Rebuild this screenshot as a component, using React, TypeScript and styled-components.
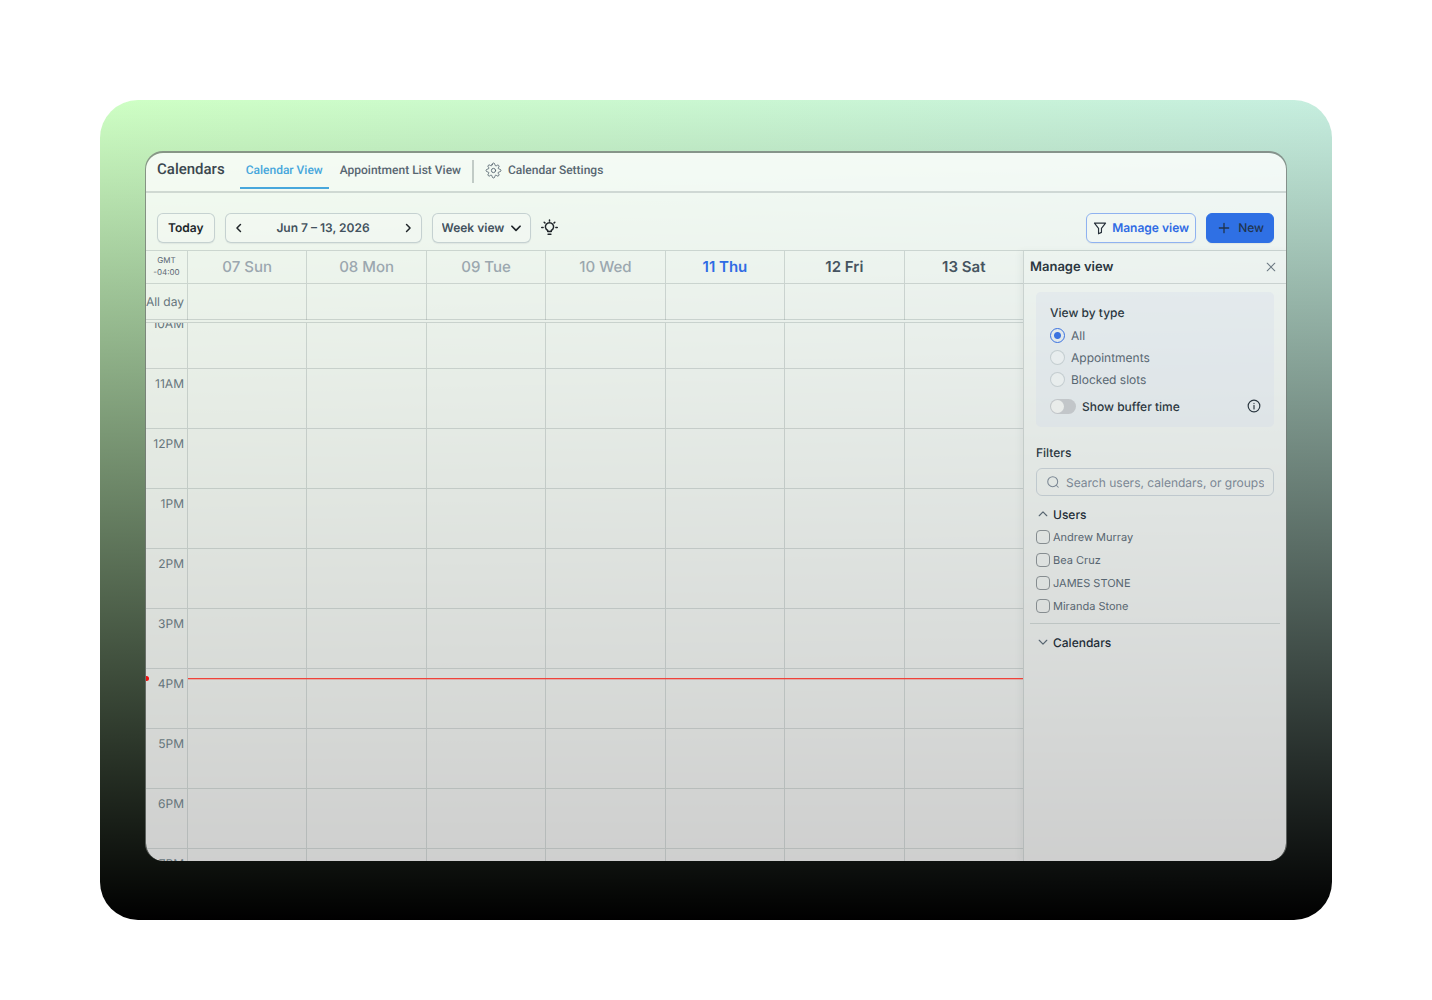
import React, { useState } from "react";
import styled, { createGlobalStyle } from "styled-components";

const GlobalStyle = createGlobalStyle`
  *, *::before, *::after { box-sizing: border-box; }
  body {
    margin: 0;
    background: #fff;
    font-family: Inter, "Liberation Sans", sans-serif;
    text-rendering: geometricPrecision;
  }
  button, input, select { font: inherit; color: inherit; margin: 0; text-rendering: inherit; }
  button { cursor: pointer; padding: 0; background: none; border: 0; }
  h1, h2, h3, p { margin: 0; font: inherit; }
`;

const line = "rgba(110, 122, 122, 0.26)";
const ink = "#2b3740";
const muted = "#586671";

const Page = styled.main`
  display: flex;
  height: 100vh;
  min-height: 640px;
  padding: 100px 100px 80px;
`;

const Backdrop = styled.div`
  flex: 1;
  min-width: 0;
  display: flex;
  padding: 51px 45px 59px;
  border-radius: 38px;
  background: linear-gradient(180deg, rgba(0, 0, 0, 0), #000),
    linear-gradient(90deg, #ceffc4, #c6eedf);
`;

const Window = styled.div`
  flex: 1;
  min-width: 0;
  display: flex;
  flex-direction: column;
  overflow: hidden;
  border: 1px solid rgba(116, 120, 118, 0.75);
  border-top-width: 2px;
  border-bottom: 0;
  border-radius: 18px;
  background: rgba(255, 255, 255, 0.8);
  background-clip: padding-box;
`;

const Header = styled.header`
  display: flex;
  align-items: flex-start;
  height: 40px;
  flex-shrink: 0;
  padding: 0 11px;
  font-family: Roboto, "Liberation Sans", sans-serif;
  font-size: 12px;
  font-weight: 500;
  color: ${muted};
  background: rgba(255, 255, 255, 0.15);
  border-bottom: 2px solid ${line};
`;

const Title = styled.h1`
  font-size: 15px;
  font-weight: 500;
  line-height: 33px;
  color: #3b474f;
  margin-right: 15px;
`;

const Tab = styled.a<{ $active?: boolean }>`
  display: flex;
  align-items: center;
  gap: 6px;
  height: 36px;
  padding: 0 6px;
  text-decoration: none;
  color: ${(p) => (p.$active ? "#47a7dc" : "inherit")};
  border-bottom: 2px solid ${(p) => (p.$active ? "#47a7dc" : "transparent")};
  white-space: nowrap;
`;

const Nav = styled.nav`
  display: flex;
  align-items: center;
  gap: 5px;
`;

const Separator = styled.span`
  width: 2px;
  height: 23px;
  background: rgba(100, 115, 115, 0.35);
`;

const Toolbar = styled.div`
  display: flex;
  align-items: center;
  gap: 10px;
  height: 58px;
  flex-shrink: 0;
  padding: 12px 12px 0 11px;
  border-bottom: 1px solid ${line};
  font-size: 12px;
  font-weight: 600;
  color: #43525e;
`;

const Box = styled.div`
  display: flex;
  align-items: center;
  height: 30px;
  border: 1px solid rgba(130, 150, 160, 0.4);
  border-radius: 6px;
  background: rgba(255, 255, 255, 0.2);
  box-shadow: 0 1px 1px rgba(60, 80, 90, 0.08);
  white-space: nowrap;
`;

const TodayButton = styled(Box).attrs({ as: "button" })`
  padding: 0 10px;
  color: #20262a;
`;

const RangeBox = styled(Box)`
  width: 197px;
  justify-content: space-between;
  padding: 0 6px;
`;

const IconButton = styled.button<{ $color?: string }>`
  display: grid;
  place-items: center;
  width: 14px;
  height: 20px;
  color: ${(p) => p.$color || "#1f2529"};
`;

const SelectBox = styled(Box)`
  position: relative;
  width: 99px;
  svg { position: absolute; right: 7px; pointer-events: none; color: #20262a; }
`;

const Select = styled.select`
  appearance: none;
  width: 100%;
  height: 100%;
  border: 0;
  padding: 0 24px 0 9px;
  background: transparent;
`;

const ManageButton = styled(Box).attrs({ as: "button" })`
  gap: 5px;
  padding: 0 6px;
  margin-left: auto;
  border-color: #8fb2f0;
  color: #2f6be4;
  svg { color: #27303a; }
`;

const NewButton = styled(Box).attrs({ as: "button" })`
  gap: 6px;
  padding: 0 9px;
  border-color: #2f70e4;
  background: #2f70e4;
  color: #21354f;
  font-weight: 500;
`;

const Content = styled.div`
  flex: 1;
  min-height: 0;
  display: flex;
`;

const Calendar = styled.section`
  flex: 1;
  min-width: 0;
  display: flex;
  flex-direction: column;
`;

const Row = styled.div<{ $h: number }>`
  display: grid;
  grid-template-columns: 41px repeat(7, minmax(0, 1fr));
  height: ${(p) => p.$h}px;
  flex-shrink: 0;
  border-bottom: 1px solid ${line};
`;

const Cell = styled.div`
  border-left: 1px solid ${line};
`;

const DayCell = styled(Cell)<{ $tone: string }>`
  font-size: 15px;
  line-height: 32px;
  text-align: center;
  font-weight: ${(p) => (p.$tone === "past" ? 500 : 600)};
  color: ${(p) =>
    p.$tone === "past" ? "#9ba7af" : p.$tone === "today" ? "#2f6be4" : "#465460"};
`;

const Zone = styled.div`
  padding-top: 3px;
  font-size: 8px;
  line-height: 12px;
  text-align: center;
  color: ${muted};
`;

const TimeLabel = styled.div`
  display: flex;
  justify-content: flex-end;
  padding-right: 3px;
  font-size: 12px;
  line-height: 30px;
  white-space: nowrap;
  color: #66757c;
`;

const AllDayLabel = styled(TimeLabel)`
  line-height: 36px;
`;

const Scroller = styled.div`
  flex: 1;
  min-height: 0;
  margin-top: 2px;
  overflow: hidden;
  border-top: 1px solid ${line};
`;

const Hours = styled.div`
  position: relative;
  margin-top: -14px;
`;

const NowLine = styled.div`
  position: absolute;
  left: 42px;
  right: 0;
  height: 1px;
  background: #f0423a;
  box-shadow: 0 1px 0 rgba(240, 66, 58, 0.3);
  &::before {
    content: "";
    position: absolute;
    left: -44px;
    top: -2px;
    width: 5px;
    height: 5px;
    border-radius: 50%;
    background: #e11;
  }
`;

const Panel = styled.aside`
  width: 263px;
  flex-shrink: 0;
  border-left: 1px solid ${line};
  box-shadow: -3px 0 6px rgba(60, 80, 80, 0.06);
  font-size: 12px;
  color: ${muted};
`;

const PanelHeader = styled.div`
  display: flex;
  align-items: center;
  justify-content: space-between;
  height: 33px;
  padding: 0 8px 0 6px;
  border-bottom: 1px solid ${line};
`;

const PanelTitle = styled.h2`
  font-size: 13px;
  font-weight: 600;
  line-height: 32px;
  color: ${ink};
`;

const PanelBody = styled.div`
  display: flex;
  flex-direction: column;
  padding: 8px 12px 0;
`;

const TypeCard = styled.fieldset`
  margin: 0;
  padding: 10px 13px 10px 14px;
  border: 0;
  border-radius: 5px;
  background: rgba(204, 212, 234, 0.24);
`;

const Label = styled.h3`
  font-weight: 500;
  line-height: 22px;
  color: ${ink};
`;

const Option = styled.label`
  display: flex;
  align-items: center;
  gap: 6px;
  height: 22px;
`;

const Radio = styled.input.attrs({ type: "radio" })`
  appearance: none;
  width: 15px;
  height: 15px;
  border: 1px solid rgba(130, 145, 155, 0.35);
  border-radius: 50%;
  background: rgba(240, 243, 241, 0.5);
  &:checked {
    border-color: #3a72e0;
    background: radial-gradient(circle, #3a72e0 3px, transparent 4px);
  }
`;

const BufferRow = styled.div`
  display: flex;
  align-items: center;
  justify-content: space-between;
  margin-top: 5px;
  color: ${ink};
  font-weight: 500;
`;

const Switch = styled.input.attrs({ type: "checkbox", role: "switch" })`
  appearance: none;
  display: flex;
  width: 26px;
  height: 15px;
  padding: 1px;
  border-radius: 8px;
  background: #c2c6c9;
  &::before {
    content: "";
    width: 13px;
    height: 13px;
    border-radius: 50%;
    background: #e9ecea;
  }
  &:checked { justify-content: flex-end; background: #3a72e0; }
`;

const FiltersTitle = styled(Label)`
  margin: 15px 0 4px;
`;

const SearchBox = styled.label`
  display: flex;
  align-items: center;
  gap: 6px;
  height: 28px;
  padding: 0 9px;
  border: 1px solid rgba(130, 145, 165, 0.35);
  border-radius: 6px;
  color: #7b8794;
  svg { flex-shrink: 0; }
`;

const SearchInput = styled.input`
  flex: 1;
  min-width: 0;
  border: 0;
  padding: 0;
  outline: 0;
  background: transparent;
  &::placeholder { color: #7b8794; opacity: 1; }
`;

const Group = styled.div`
  margin-top: 8px;
`;

const GroupToggle = styled.button`
  display: flex;
  align-items: center;
  gap: 3px;
  height: 20px;
  font-weight: 500;
  color: #222c36;
  svg { color: ${muted}; }
`;

const UserList = styled.div`
  display: flex;
  flex-direction: column;
  gap: 1px;
  margin: 2px 0 6px;
  font-size: 11px;
`;

const UserOption = styled(Option)`
  gap: 3px;
`;

const Checkbox = styled.input.attrs({ type: "checkbox" })`
  appearance: none;
  width: 14px;
  height: 14px;
  border: 1px solid #868d90;
  border-radius: 4px;
  &:checked { background: #3a72e0; border-color: #3a72e0; }
`;

const Divider = styled.hr`
  align-self: stretch;
  margin: 0 -6px 8px;
  border: 0;
  border-top: 1px solid ${line};
`;

type IconProps = { size?: number; w?: number; children: React.ReactNode };
const Icon = ({ size = 14, w = 2, children }: IconProps) => (
  <svg width={size} height={size} viewBox="0 0 24 24" fill="none" stroke="currentColor"
    strokeWidth={w} strokeLinecap="round" strokeLinejoin="round" aria-hidden="true">
    {children}
  </svg>
);

const days = [
  ["07 Sun", "past"],
  ["08 Mon", "past"],
  ["09 Tue", "past"],
  ["10 Wed", "past"],
  ["11 Thu", "today"],
  ["12 Fri", "next"],
  ["13 Sat", "next"],
];
const hours = ["10AM", "11AM", "12PM", "1PM", "2PM", "3PM", "4PM", "5PM", "6PM", "7PM"];
const users = ["Andrew Murray", "Bea Cruz", "JAMES STONE", "Miranda Stone"];
const types = ["All", "Appointments", "Blocked slots"];
const HOUR = 60;
const minutesFromStart = 369;

function UsersGroup() {
  return (
    <Group>
      <GroupToggle aria-expanded="true">
        <Icon><path d="M5.500 15l6.500-6.500L18.500 15" /></Icon>
        Users
      </GroupToggle>
      <UserList>
        {users.map((u) => <UserOption key={u}><Checkbox />{u}</UserOption>)}
      </UserList>
    </Group>
  );
}

export default function App() {
  const [type, setType] = useState("All");
  return (
    <Page>
      <GlobalStyle />
      <Backdrop>
        <Window>
          <Header>
            <Title>Calendars</Title>
            <Nav>
              <Tab href="#calendar" $active>Calendar View</Tab>
              <Tab href="#list">Appointment List View</Tab>
              <Separator />
              <Tab href="#settings">
                <Icon size={17} w={1.3}>
                  <path d="M10 3.800Q10.300 1.500 12 1.500T14 3.800Q14.200 5.300 15.300 5.400T17.600 4.400Q18.700 4.200 19.400 5T19.700 7Q18.500 8.200 18.700 9T20.200 10Q22.500 10.300 22.500 12T20.200 14Q18.600 14.200 18.600 15.300T19.700 17.200Q20 18.500 19.300 19.300T17.200 19.700Q15.900 18.500 15 18.700T14 20.200Q13.700 22.500 12 22.500T10 20.200Q9.800 18.600 8.700 18.600T6.800 19.700Q5.500 20 4.700 19.300T4.300 17.200Q5.500 15.900 5.300 15T3.800 14Q1.500 13.700 1.500 12T3.800 10Q5.400 9.800 5.400 8.700T4.300 6.800Q4 5.500 4.700 4.700T6.800 4.300Q8.100 5.500 9 5.300T10 3.800z" />
                  <circle cx="12" cy="12" r="3" />
                </Icon>
                Calendar Settings
              </Tab>
            </Nav>
          </Header>
          <Toolbar>
            <TodayButton>Today</TodayButton>
            <RangeBox>
              <IconButton aria-label="Previous week"><Icon w={2.6}><path d="M14.500 6l-6 6 6 6" /></Icon></IconButton>
              <span>Jun 7 – 13, 2026</span>
              <IconButton aria-label="Next week"><Icon w={2.6}><path d="M9.500 6l6 6-6 6" /></Icon></IconButton>
            </RangeBox>
            <SelectBox>
              <Select aria-label="View" defaultValue="Week view">
                <option>Day view</option>
                <option>Week view</option>
                <option>Month view</option>
              </Select>
              <Icon w={3}><path d="M5 9l7 7 7-7" /></Icon>
            </SelectBox>
            <IconButton aria-label="Tips">
              <Icon size={17} w={2.1}>
                <path d="M9.500 17.500v-1.300a5.800 5.800 0 1 1 5 0v1.300z" />
                <path d="M10 21.500h4M12 1.500v1.500M4.500 4.500l1 1M19.500 4.500l-1 1M1 12h2M21 12h2" />
              </Icon>
            </IconButton>
            <ManageButton>
              <Icon><path d="M2.500 3.500h19l-7 9v7l-5 2.500v-9.500z" /></Icon>
              Manage view
            </ManageButton>
            <NewButton>
              <Icon size={16}><path d="M12 5v14M5 12h14" /></Icon>
              New
            </NewButton>
          </Toolbar>
          <Content>
            <Calendar>
              <Row $h={33}>
                <Zone>GMT<br />-04:00</Zone>
                {days.map(([name, tone]) => <DayCell key={name} $tone={tone}>{name}</DayCell>)}
              </Row>
              <Row $h={36}>
                <AllDayLabel>All day</AllDayLabel>
                {days.map(([name]) => <Cell key={name} />)}
              </Row>
              <Scroller>
                <Hours>
                  {hours.map((h) => (
                    <Row key={h} $h={HOUR}>
                      <TimeLabel>{h}</TimeLabel>
                      {days.map(([name]) => <Cell key={name} />)}
                    </Row>
                  ))}
                  <NowLine style={{ top: (minutesFromStart * HOUR) / 60 }} />
                </Hours>
              </Scroller>
            </Calendar>
            <Panel>
              <PanelHeader>
                <PanelTitle>Manage view</PanelTitle>
                <IconButton aria-label="Close" $color="#6b7882">
                  <Icon w={1.8}><path d="M5.500 5.500l13 13M18.500 5.500l-13 13" /></Icon>
                </IconButton>
              </PanelHeader>
              <PanelBody>
                <TypeCard aria-label="View by type">
                  <Label>View by type</Label>
                  <div>
                    {types.map((t) => (
                      <Option key={t}>
                        <Radio name="type" checked={type === t} onChange={() => setType(t)} />
                        {t}
                      </Option>
                    ))}
                  </div>
                  <BufferRow>
                    <Option><Switch />Show buffer time</Option>
                    <Icon><circle cx="12" cy="12" r="10" /><path d="M12 11v6M12 7.500v.1" /></Icon>
                  </BufferRow>
                </TypeCard>
                <FiltersTitle>Filters</FiltersTitle>
                <SearchBox>
                  <Icon w={1.8}><circle cx="11.500" cy="11.500" r="8.500" /><path d="M21 21l-3-3" /></Icon>
                  <SearchInput aria-label="Search" placeholder="Search users, calendars, or groups" />
                </SearchBox>
                <UsersGroup />
                <Divider />
                <GroupToggle aria-expanded="false">
                  <Icon><path d="M5.500 9l6.500 6.500L18.500 9" /></Icon>
                  Calendars
                </GroupToggle>
              </PanelBody>
            </Panel>
          </Content>
        </Window>
      </Backdrop>
    </Page>
  );
}
